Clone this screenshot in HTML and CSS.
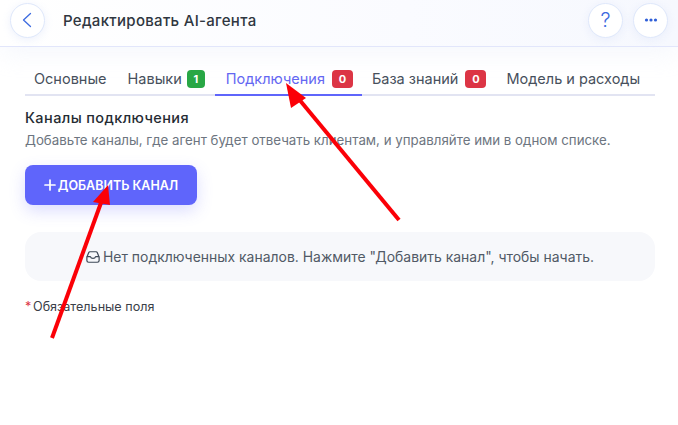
FILE: index.html
```html
<!DOCTYPE html>
<html lang="ru">
<head>
<meta charset="utf-8">
<title>Редактировать AI-агента</title>
<link rel="stylesheet" href="styles.css">
</head>
<body>
<div class="page">
  <header class="topbar">
    <button class="round" type="button" aria-label="Назад">
      <svg width="16" height="16" viewBox="0 0 16 16"><path d="M10.500 1.500 3.500 8l7 6.500" fill="none" stroke="#3d6be0" stroke-width="1.300" stroke-linecap="round" stroke-linejoin="round"/></svg>
    </button>
    <h1 class="title">Редактировать AI-агента</h1>
    <div class="actions">
      <button class="round help" type="button">?</button>
      <button class="round" type="button" aria-label="Ещё">
        <svg width="14" height="14" viewBox="0 0 14 14"><circle cx="2.500" cy="7" r="1.600" fill="#2f5fd8"/><circle cx="7" cy="7" r="1.600" fill="#2f5fd8"/><circle cx="11.500" cy="7" r="1.600" fill="#2f5fd8"/></svg>
      </button>
    </div>
  </header>

  <main class="content">
    <nav class="tabs">
      <a class="tab first">Основные</a>
      <a class="tab">Навыки <span class="badge green">1</span></a>
      <a class="tab active">Подключения <span class="badge red">0</span></a>
      <a class="tab">База знаний <span class="badge red">0</span></a>
      <a class="tab">Модель и расходы</a>
    </nav>

    <h2 class="section-title">Каналы подключения</h2>
    <p class="section-sub">Добавьте каналы, где агент будет отвечать клиентам, и управляйте ими в одном списке.</p>

    <button class="add" type="button">
      <svg width="12" height="12" viewBox="0 0 12 12"><path d="M6 1v10M1 6h10" stroke="#fff" stroke-width="1.700" stroke-linecap="round"/></svg>
      ДОБАВИТЬ КАНАЛ
    </button>

    <div class="empty">
      <svg width="14" height="14" viewBox="0 0 16 16"><path d="M4.400 2h7.200c.5 0 .9.3 1.100.7l2 4.600c.2.3.3.6.3 1V12c0 1.100-.9 2-2 2H3c-1.100 0-2-.9-2-2V8.300c0-.4.1-.7.3-1l2-4.600c.2-.4.6-.7 1.100-.7Z M1.200 7.500H5c.4 1.300 1.500 2 3 2s2.600-.7 3-2h3.800" fill="none" stroke="#3f4a58" stroke-width="1.400" stroke-linejoin="round"/></svg>
      Нет подключенных каналов. Нажмите "Добавить канал", чтобы начать.
    </div>

    <p class="required"><span class="star">*</span>Обязательные поля</p>
  </main>

  <svg class="arrows" width="678" height="425" viewBox="0 0 678 425" aria-hidden="true">
    <path d="M399 220 298 98" stroke="#fb0007" stroke-width="4" fill="none"/>
    <path d="M286 83 306 98 291 108Z" fill="#fb0007"/>
    <path d="M52 338 102 200" stroke="#fb0007" stroke-width="4" fill="none"/>
    <path d="M108 185 110 205 93 202Z" fill="#fb0007"/>
  </svg>
</div>
</body>
</html>
```
FILE: styles.css
```css
* { box-sizing: border-box; }
html, body { margin: 0; height: 100%; }
body { background: #fff; font-family: Inter, "Noto Sans", sans-serif; color: #333c48; overflow: hidden; }
.page { position: relative; width: 678px; height: 425px; }
.topbar {
  height: 47px; display: flex; align-items: center; gap: 18px;
  padding: 0 10px 6px 10px;
  background: linear-gradient(90deg, #fff 0%, #fafbff 60%, #f6f8fe 100%);
  border-bottom: 1px solid #e2e6fb;
  box-shadow: 0 8px 24px rgba(240, 243, 252, .6);
}
.round {
  width: 35px; height: 35px; border-radius: 50%; padding: 0;
  display: flex; align-items: center; justify-content: center;
  background: #fff; border: 1px solid #dfe8fb;
  box-shadow: 0 2px 8px rgba(225, 232, 250, .6);
}
.help { font: 300 20px Inter, sans-serif; color: #3d6be0; }
.title { margin: 0; font-size: 15px; font-weight: 500; color: #2f3640; letter-spacing: .3px; }
.actions { margin-left: auto; display: flex; gap: 10px; }
.content { padding: 17px 23px 0 25px; }
.tabs { display: flex; border-bottom: 2px solid #e2e4f2; height: 32px; }
.tab {
  height: 32px; padding: 0 10px 2px; display: flex; align-items: center; gap: 5px;
  font-size: 14.500px; color: #47505c; white-space: nowrap;
  border-bottom: 2px solid transparent;
}
.tab.first { padding-left: 9px; padding-right: 11px; }
.tab.active { color: #6467f2; border-bottom-color: #5f65fb; padding-left: 11px; padding-right: 9px; }
.badge {
  display: inline-flex; align-items: center; justify-content: center;
  height: 18px; width: 21px; border-radius: 4px; margin-top: 2px;
  font-size: 11px; font-weight: 700; color: #fff;
}
.badge.green { background: #28a745; width: 18px; }
.badge.red { background: #dc3545; margin-left: 2px; }
.section-title { margin: 13px 0 0; font-size: 14.500px; font-weight: 500; line-height: 18px; color: #252b33; letter-spacing: .4px; }
.section-sub { margin: 4px 0 0; font-size: 13.300px; line-height: 18px; color: #6d7580; }
.add {
  margin-top: 16px; width: 172px; height: 40px; border: 0; border-radius: 8px;
  display: flex; align-items: center; justify-content: center; gap: 2px;
  background: #5f65fb; color: #fff; font: 600 12.500px Inter, sans-serif;
  box-shadow: 0 6px 16px rgba(95, 101, 251, .22);
}
.empty {
  margin-top: 27px; height: 49px; border-radius: 16px; background: #f7f8fb;
  display: flex; align-items: center; justify-content: center; gap: 3px;
  font-size: 13.950px; color: #515a66;
}
.required { margin: 18px 0 0; font-size: 12.600px; line-height: 16px; color: #3a4048; }
.star { display: inline-block; width: 8px; color: #dc3545; }
.arrows { position: absolute; left: 0; top: 0; pointer-events: none; }
```
